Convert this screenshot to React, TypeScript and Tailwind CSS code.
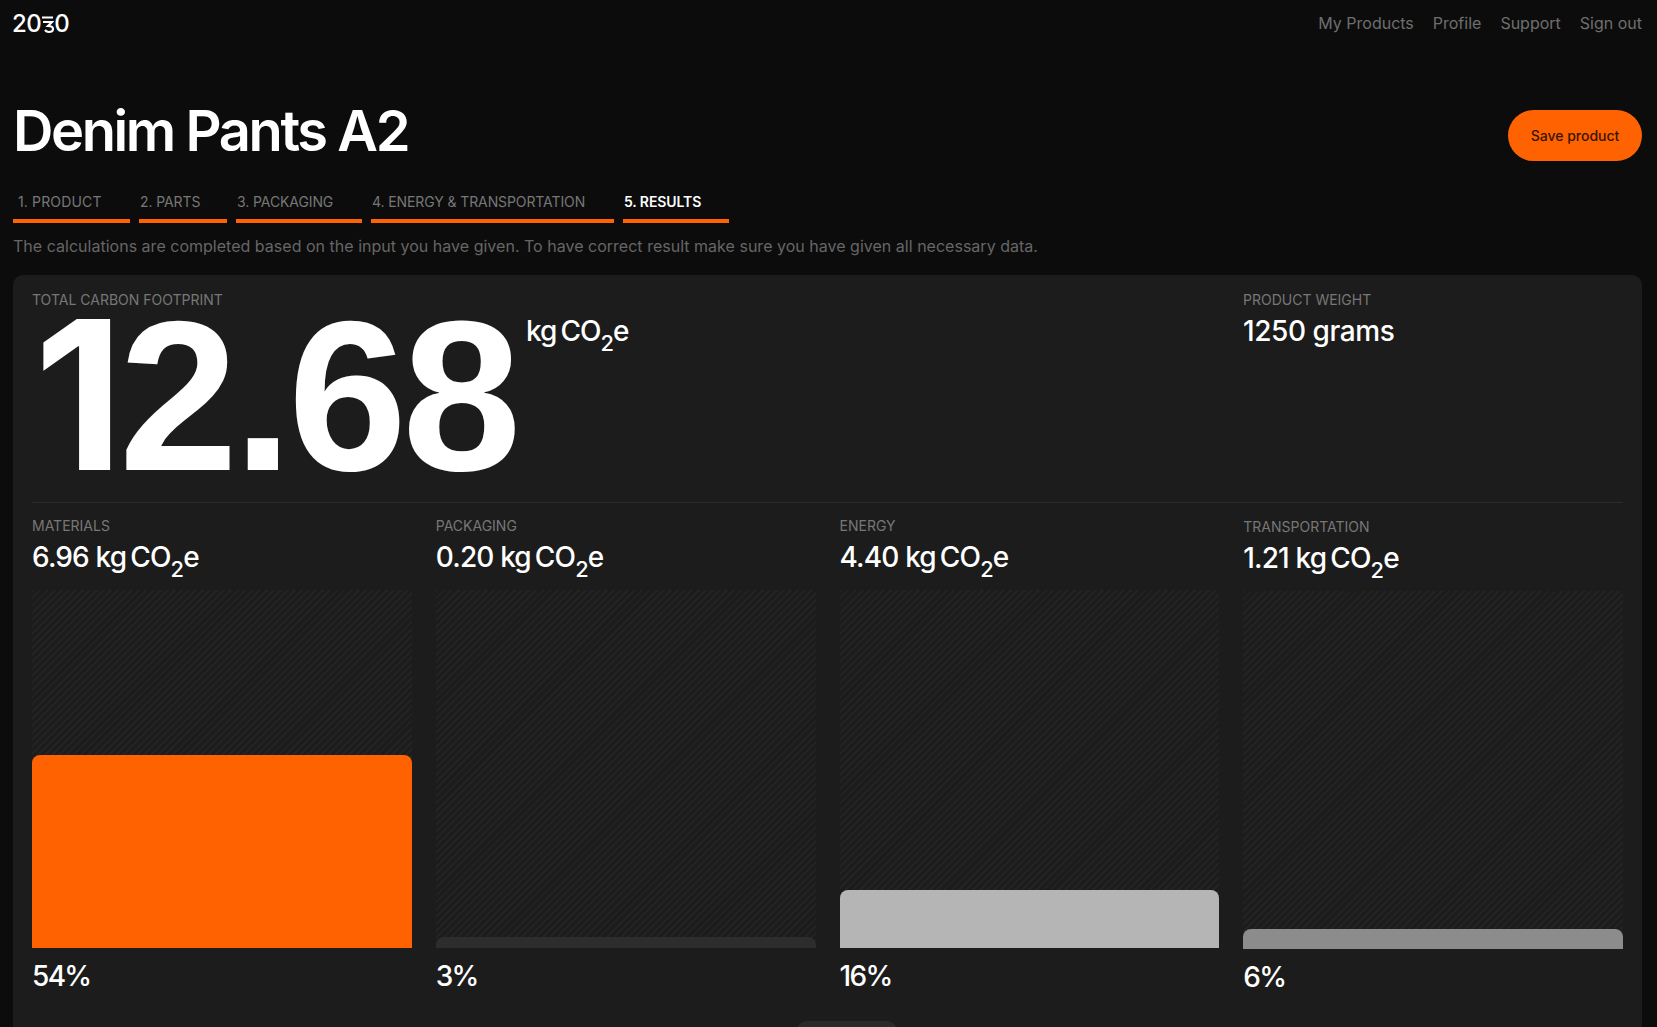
import React from "react";

const navLinks = ["My Products", "Profile", "Support", "Sign out"];

const steps = [
  { label: "1. PRODUCT", width: "w-[117px]", inset: "pl-[5px] tracking-[0.15px]" },
  { label: "2. PARTS", width: "w-[88px]", inset: "pl-[1px] tracking-[-0.1px]" },
  { label: "3. PACKAGING", width: "w-[126px]", inset: "pl-[1px] tracking-[-0.1px]" },
  { label: "4. ENERGY & TRANSPORTATION", width: "w-[243px]", inset: "pl-[1px] tracking-[-0.1px]" },
  { label: "5. RESULTS", width: "w-[106px]", inset: "pl-[1px] tracking-[-0.1px]", active: true },
];

const results = [
  { name: "MATERIALS", value: "6.96", percent: "54%", bar: "h-[193px] bg-[#ff6200]", shift: "" },
  { name: "PACKAGING", value: "0.20", percent: "3%", bar: "h-[11px] bg-[#2d2d2d]", shift: "" },
  { name: "ENERGY", value: "4.40", percent: "16%", bar: "h-[58px] bg-[#b5b5b5]", shift: "" },
  { name: "TRANSPORTATION", value: "1.21", percent: "6%", bar: "h-[20px] bg-[#8c8c8c]", shift: "pt-px" },
];

const Unit: React.FC = () => (
  <span>
    kg<span className="ml-[4px]">CO</span>
    <sub className="text-[0.78em] align-[-0.2em] leading-none">2</sub>e
  </span>
);

const App: React.FC = () => {
  return (
    <div className="h-[1027px] overflow-hidden bg-[#0c0c0c] font-['Inter',sans-serif] text-white">
      <header className="flex items-start justify-between pl-[12px] pr-[15px] pt-[12px]">
        <div className="flex items-center text-[24px] leading-[24px] font-medium tracking-[-0.02em]">
          <span>20</span>
          <svg width="13" height="20" viewBox="0 0 13 20" fill="none" stroke="white" strokeWidth="2.2">
            <path d="M1 3.5h11M2 8h9l-4 4c3 0 5 .8 5 3s-2 3-4 3-3-.6-4-2" />
          </svg>
          <span>0</span>
        </div>
        <nav className="flex gap-[19px] pt-[1px] text-[16px] leading-[20px] text-[#6f6f6f]">
          {navLinks.map((link) => (
            <a key={link}>{link}</a>
          ))}
        </nav>
      </header>

      <div className="flex items-start justify-between pl-[13px] pr-[15px] pt-[61px]">
        <h1 className="text-[56px] leading-[68px] font-semibold tracking-[-0.043em]">Denim Pants A2</h1>
        <button className="mt-[13px] h-[51px] w-[134px] rounded-full bg-[#ff6200] text-[14px] font-medium text-[#3a1500]">
          Save product
        </button>
      </div>

      <div className="flex gap-[9px] pl-[13px] pt-[28px]">
        {steps.map((step) => (
          <div key={step.label} className={`${step.width} ${step.inset} border-b-[4px] border-[#ff6200] pb-[9px]`}>
            <span className={`block text-[14px] leading-[17px] ${step.active ? "font-semibold text-white" : "text-[#777777]"}`}>
              {step.label}
            </span>
          </div>
        ))}
      </div>

      <p className="pl-[13px] pt-[13px] text-[16px] leading-[20px] tracking-[0.016px] text-[#666666]">
        The calculations are completed based on the input you have given. To have correct result make sure you have given all necessary data.
      </p>

      <main className="ml-[13px] mr-[15px] mt-[19px] h-[800px] rounded-[10px] bg-[#1c1c1c] px-[19px] pt-[16px]">
        <div className="flex h-[212px] border-b border-[#2c2c2c]">
          <div className="w-[1211px]">
            <div className="text-[14px] leading-[17px] text-[#777777]">TOTAL CARBON FOOTPRINT</div>
            <div className="flex items-start">
              <div className="ml-[2px] mt-[-4px] h-[180px] w-[492px] font-['Liberation_Sans',Arial,sans-serif] text-[214px] leading-[180px] font-bold tracking-[-0.022em] whitespace-nowrap">
                <span className="font-['Inter',sans-serif] text-[208px]">1</span>2.68
              </div>
              <div className="mt-[6px] text-[28px] leading-[34px] font-medium tracking-[-0.035em]">
                <Unit />
              </div>
            </div>
          </div>
          <div>
            <div className="text-[14px] leading-[17px] text-[#777777]">PRODUCT WEIGHT</div>
            <div className="mt-[6px] text-[28px] leading-[34px] font-medium tracking-[-0.015em]">1250 grams</div>
          </div>
        </div>

        <div className="grid grid-cols-4 gap-x-[24px] pt-[14px]">
          {results.map((item) => (
            <section key={item.name} className={item.shift}>
              <div className="text-[14px] leading-[17px] text-[#777777]">{item.name}</div>
              <div className="mt-[6px] text-[28px] leading-[34px] font-medium tracking-[-0.03em]">
                {item.value} <Unit />
              </div>
              <div className="mt-[15px] flex h-[358px] items-end bg-[repeating-linear-gradient(135deg,#232323_0_2px,#1c1c1c_2px_5px)]">
                <div className={`w-full rounded-t-[8px] ${item.bar}`} />
              </div>
              <div className="mt-[11px] text-[28px] leading-[34px] font-medium tracking-[-0.06em]">{item.percent}</div>
            </section>
          ))}
        </div>

        <div className="ml-[765px] mt-[27px] h-[10px] w-[100px] rounded-t-[10px] bg-[#2a2a2a]" />
      </main>
    </div>
  );
};

export default App;
